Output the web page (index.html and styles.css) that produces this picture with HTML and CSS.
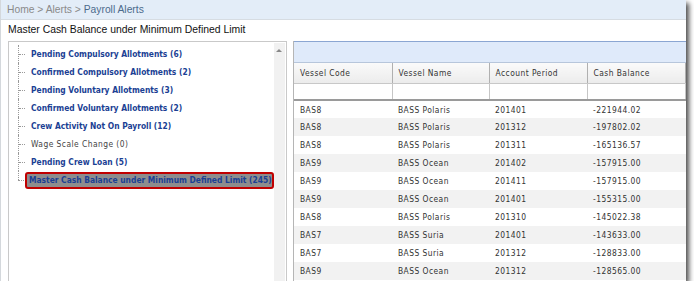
FILE: index.html
```html
<!DOCTYPE html>
<html lang="en">
<head>
  <meta charset="UTF-8" />
  <title>Payroll Alerts</title>
  <link rel="stylesheet" href="styles.css">
</head>
<body>

<div class="frame">
  <div class="crumbs">
    <span class="crumb">Home</span> &gt; <span class="crumb">Alerts</span> &gt; <span class="crumb-current">Payroll Alerts</span>
  </div>
  <div class="page-title">Master Cash Balance under Minimum Defined Limit</div>

  <div class="content">
    <div class="tree-panel">
      <ul class="tree">
        <li><a class="node">Pending Compulsory Allotments (6)</a></li>
        <li><a class="node">Confirmed Compulsory Allotments (2)</a></li>
        <li><a class="node">Pending Voluntary Allotments (3)</a></li>
        <li><a class="node">Confirmed Voluntary Allotments (2)</a></li>
        <li><a class="node">Crew Activity Not On Payroll (12)</a></li>
        <li><a class="node empty">Wage Scale Change (0)</a></li>
        <li><a class="node">Pending Crew Loan (5)</a></li>
        <li class="last"><a class="node selected">Master Cash Balance under Minimum Defined Limit (245)</a></li>
      </ul>
      <div class="scrollbar"><span class="arrow-up"></span></div>
    </div>

    <div class="grid-panel">
      <div class="grid-toolbar"></div>
      <table class="grid">
        <colgroup>
          <col class="c1"><col class="c2"><col class="c3"><col class="c4">
        </colgroup>
        <thead>
          <tr class="head">
            <th>Vessel Code</th><th>Vessel Name</th><th>Account Period</th><th>Cash Balance</th>
          </tr>
          <tr class="filter">
            <td></td><td></td><td></td><td></td>
          </tr>
        </thead>
        <tbody>
          <tr><td>BAS8</td><td>BASS Polaris</td><td>201401</td><td>-221944.02</td></tr>
          <tr><td>BAS8</td><td>BASS Polaris</td><td>201312</td><td>-197802.02</td></tr>
          <tr><td>BAS8</td><td>BASS Polaris</td><td>201311</td><td>-165136.57</td></tr>
          <tr><td>BAS9</td><td>BASS Ocean</td><td>201402</td><td>-157915.00</td></tr>
          <tr><td>BAS9</td><td>BASS Ocean</td><td>201411</td><td>-157915.00</td></tr>
          <tr><td>BAS9</td><td>BASS Ocean</td><td>201401</td><td>-155315.00</td></tr>
          <tr><td>BAS8</td><td>BASS Polaris</td><td>201310</td><td>-145022.38</td></tr>
          <tr><td>BAS7</td><td>BASS Suria</td><td>201401</td><td>-143633.00</td></tr>
          <tr><td>BAS7</td><td>BASS Suria</td><td>201312</td><td>-128833.00</td></tr>
          <tr><td>BAS9</td><td>BASS Ocean</td><td>201312</td><td>-128565.00</td></tr>
        </tbody>
      </table>
    </div>
  </div>
</div>

</body>
</html>
```

FILE: styles.css
```css
/* Reset */
* {
  box-sizing: border-box;
}
body {
  margin: 0;
  padding: 0;
  background: #fff;
  font-family: 'Liberation Sans', Arial, sans-serif;
  color: #222;
}
.frame {
  width: 686px;
  height: 281px;
  overflow: hidden;
  background: #fff;
  border-left: 1px solid #d4d8dc;
  box-shadow: 3px 3px 5px rgba(0,0,0,0.7);
}

/* Breadcrumb */
.crumbs {
  height: 20px;
  background: #e3edf8;
  border-bottom: 1px solid #d6dce2;
  padding-left: 6px;
  font-size: 10.3px;
  line-height: 19px;
  color: #8a8a8a;
}
.crumb-current {
  color: #4c6b8c;
}
.page-title {
  height: 21px;
  padding-left: 7px;
  font-size: 10.4px;
  line-height: 20px;
  color: #111;
}

/* Layout */
.content {
  display: flex;
  padding-left: 7px;
  gap: 6px;
  height: 240px;
}

/* Tree */
.tree-panel {
  width: 279px;
  display: flex;
  border: 1px solid #c9c9c9;
  border-bottom: none;
}
.tree {
  flex: 1;
  list-style: none;
  margin: 0;
  padding: 3px 0 0 9px;
  font-family: 'DejaVu Sans Condensed', 'DejaVu Sans', sans-serif;
  font-size: 8.4px;
}
.tree li {
  position: relative;
  height: 18px;
  padding-left: 8px;
  border-left: 1px dotted #999;
  display: flex;
  align-items: center;
}
.tree li::before {
  content: "";
  position: absolute;
  left: 0;
  top: 9px;
  width: 6px;
  border-top: 1px dotted #999;
}
.tree li.last {
  border-left: none;
}
.tree li.last::after {
  content: "";
  position: absolute;
  left: 0;
  top: 0;
  height: 9px;
  border-left: 1px dotted #999;
}
.node {
  font-weight: bold;
  color: #1b3f94;
  white-space: nowrap;
  padding: 0 4px;
}
.node.empty {
  font-weight: normal;
  color: #444;
  letter-spacing: 0.45px;
}
.node.selected {
  background: #8d8d8d;
  border: 2px solid #c00000;
  border-radius: 3px;
  line-height: 13px;
  margin-left: -1px;
  padding: 0 0 0 2px;
}
.scrollbar {
  width: 13px;
  margin: 1px 1px 0 0;
  background: #f1f1f1;
  display: flex;
  justify-content: center;
}
.arrow-up {
  margin-top: 6px;
  width: 0;
  height: 0;
  border-left: 3px solid transparent;
  border-right: 3px solid transparent;
  border-bottom: 3px solid #888;
}

/* Grid */
.grid-panel {
  flex: 1;
  border-left: 1px solid #b5b5b5;
}
.grid-toolbar {
  height: 22px;
  background: #dfeafa;
  border-top: 1px solid #8ba6d2;
  border-bottom: 1px solid #b7c6db;
}
.grid {
  width: 100%;
  border-collapse: collapse;
  table-layout: fixed;
  font-family: 'DejaVu Sans Condensed', 'DejaVu Sans', sans-serif;
  font-size: 8.4px;
  letter-spacing: 0.45px;
  color: #333;
}
.c1 { width: 98px; }
.c2 { width: 97px; }
.c3 { width: 98px; }
.grid th {
  height: 20px;
  text-align: left;
  font-weight: normal;
  padding: 0 6px;
  background: linear-gradient(#fafafa, #ececec);
  border-right: 1px solid #b0b0b0;
  border-bottom: 1px solid #c8c8c8;
}
.grid .filter td {
  height: 17px;
  border-right: 1px solid #c6c6c6;
  border-bottom: 2px solid #9a9a9a;
  background: #fff;
}
.grid tbody td {
  height: 18px;
  padding: 0 6px;
  white-space: nowrap;
}
.grid tbody tr:nth-child(even) {
  background: #f2f2f2;
}
```
